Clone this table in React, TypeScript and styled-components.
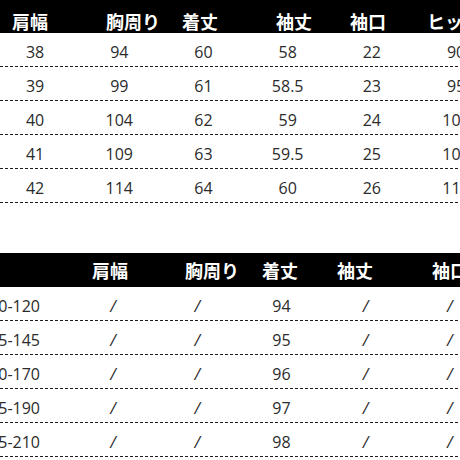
import styled, { createGlobalStyle } from "styled-components";

const GlobalStyle = createGlobalStyle`
  html, body {
    margin: 0;
    padding: 0;
    background: #fff;
    overflow: hidden;
  }
`;

const topHead = [
  { label: "肩幅", width: 94 },
  { label: "胸周り", width: 76 },
  { label: "着丈", width: 94 },
  { label: "袖丈", width: 74 },
  { label: "袖口", width: 77 },
  { label: "ヒップ", width: 80 },
];

const topRows = [
  ["38", "94", "60", "58", "22", "90"],
  ["39", "99", "61", "58.5", "23", "95"],
  ["40", "104", "62", "59", "24", "100"],
  ["41", "109", "63", "59.5", "25", "105"],
  ["42", "114", "64", "60", "26", "110"],
];

const bottomHead = [
  { label: "肩幅", width: 93 },
  { label: "胸周り", width: 77 },
  { label: "着丈", width: 75 },
  { label: "袖丈", width: 95 },
  { label: "袖口", width: 80 },
];

const bottomRows = [
  ["100-120", "/", "/", "94", "/", "/"],
  ["125-145", "/", "/", "95", "/", "/"],
  ["150-170", "/", "/", "96", "/", "/"],
  ["175-190", "/", "/", "97", "/", "/"],
  ["195-210", "/", "/", "98", "/", "/"],
];

const App = () => {
  return (
    <Page>
      <GlobalStyle />
      <Table $gapAfter={50}>
        <HeadBar $height={33} $padTop={8} $padLeft={12}>
          {topHead.map((h) => (
            <HeadLabel key={h.label} $width={h.width}>
              {h.label}
            </HeadLabel>
          ))}
        </HeadBar>
        {topRows.map((row, i) => (
          <TopRow key={i}>
            {row.map((v, j) => (
              <Cell key={j}>{v}</Cell>
            ))}
          </TopRow>
        ))}
      </Table>

      <Table>
        <HeadBar $height={34} $padTop={0} $padLeft={92}>
          {bottomHead.map((h) => (
            <HeadLabel key={h.label} $width={h.width}>
              {h.label}
            </HeadLabel>
          ))}
        </HeadBar>
        {bottomRows.map((row, i) => (
          <BottomRow key={i}>
            {row.map((v, j) =>
              j === 0 ? (
                <SizeCell key={j}>
                  <span>{v}</span>
                </SizeCell>
              ) : (
                <Cell key={j} $slash={v === "/"}>
                  {v}
                </Cell>
              )
            )}
          </BottomRow>
        ))}
      </Table>
    </Page>
  );
};

const Page = styled.div`
  width: 460px;
  height: 460px;
  overflow: hidden;
  display: flex;
  flex-direction: column;
  background: #fff;
  font-family: "Open Sans", "Noto Sans", "Noto Sans CJK JP", sans-serif;
`;

const Table = styled.div<{ $gapAfter?: number }>`
  display: flex;
  flex-direction: column;
  margin-bottom: ${(p) => p.$gapAfter ?? 0}px;
`;

const HeadBar = styled.div<{ $height: number; $padTop: number; $padLeft: number }>`
  height: ${(p) => p.$height}px;
  box-sizing: border-box;
  padding-top: ${(p) => p.$padTop}px;
  padding-left: ${(p) => p.$padLeft}px;
  background: #000;
  display: flex;
  align-items: center;
  white-space: nowrap;
  overflow: hidden;
`;

const HeadLabel = styled.span<{ $width: number }>`
  flex: 0 0 ${(p) => p.$width}px;
  color: #fff;
  font-family: "Noto Sans CJK JP", sans-serif;
  font-weight: 700;
  font-size: 18px;
  line-height: 24px;
`;

const rowBase = `
  display: grid;
  height: 34px;
  align-items: center;
  padding-top: 3px;
  box-sizing: border-box;
  background-image: repeating-linear-gradient(
    to right,
    #1e1e1e 0 3px,
    transparent 3px 5px
  );
  background-size: 100% 1px;
  background-repeat: no-repeat;
`;

const TopRow = styled.div`
  ${rowBase}
  grid-template-columns: repeat(6, 84.2px);
  margin-left: -7px;
  width: 467px;
  background-position: 7px 100%;
`;

const BottomRow = styled.div`
  ${rowBase}
  grid-template-columns: 71px repeat(5, 84.2px);
  background-position: 0 100%;
`;

const Cell = styled.div<{ $slash?: boolean }>`
  text-align: center;
  font-size: 16px;
  line-height: 20px;
  color: #2b2b2b;
  white-space: nowrap;
  font-style: ${(p) => (p.$slash ? "italic" : "normal")};
`;

const SizeCell = styled(Cell)`
  display: flex;
  justify-content: flex-end;
  padding-right: 31px;
  min-width: 0;
`;

export default App;
